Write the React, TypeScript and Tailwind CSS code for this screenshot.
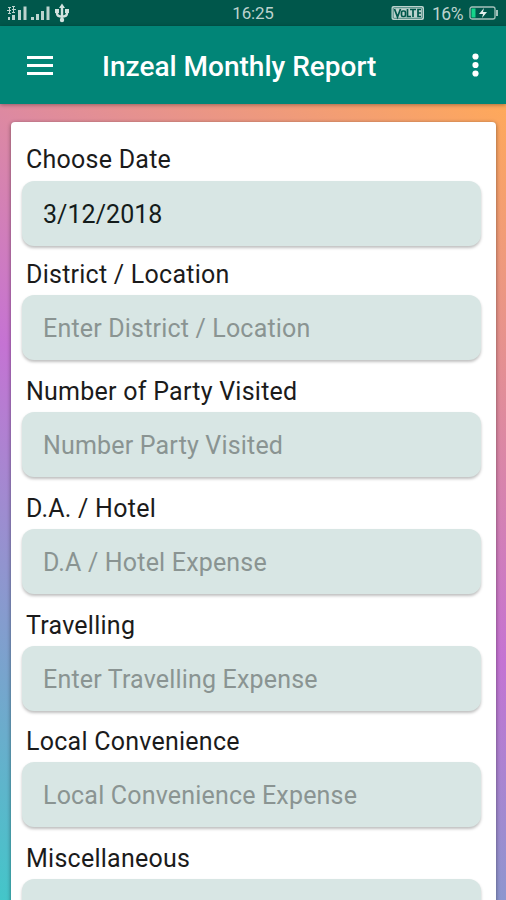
import clsx from "clsx";

const fields = [
  { label: "Choose Date", value: "3/12/2018", height: "h-[114px]", labelPad: "pb-[4px]" },
  { label: "District / Location", placeholder: "Enter District / Location", height: "h-[117px]", labelPad: "pb-[2px]" },
  { label: "Number of Party Visited", placeholder: "Number Party Visited", height: "h-[117px]", labelPad: "pb-[2px]" },
  { label: "D.A. / Hotel", placeholder: "D.A / Hotel Expense", height: "h-[117px]", labelPad: "pb-[2px]" },
  { label: "Travelling", placeholder: "Enter Travelling Expense", height: "h-[116px]", labelPad: "pb-[2px]" },
  { label: "Local Convenience", placeholder: "Local Convenience Expense", height: "h-[117px]", labelPad: "pb-[2px]" },
  { label: "Miscellaneous", placeholder: "", height: "h-[117px]", labelPad: "pb-[2px]" },
];

function StatusBar() {
  return (
    <div className="flex h-[26px] shrink-0 items-center justify-between bg-[#00574b] pr-[7px] pl-[7px] text-[#bcd3ce]">
      <svg width="64" height="22" viewBox="0 0 64 22" fill="currentColor">
        <path d="M1 5h3v1H1zM5 4h3v1H5zM0 8h4v1H0zM5 7h4v1H5zM1 11h3v1H1zM5 10h3v1H5zM2 5h1v7H2zM6 4h1v7H6z" />
        <path d="M1 15h2v3H1zM5 13h3v5H5zM11 8h3v10h-3zM16.500 4.500h3V18h-3z" />
        <path d="M24 15h3v3h-3zM29 12h3v6h-3zM34 9h3v9h-3zM39.500 4.500h3V18h-3z" />
        <g fill="none" stroke="#d3e2df" strokeWidth="2.400">
          <path d="M55 4v15M50 9v2.500q0 3 5 3 5 0 5-3V9" />
        </g>
        <g fill="#d3e2df">
          <path d="M55 1.500l3 4.500h-6zM48 7h4v4h-4zM58 7h4v4h-4z" />
          <circle cx="55" cy="18" r="2.200" />
        </g>
      </svg>
      <span className="pt-[2px] pl-[44px] text-[17px] tracking-[-0.2px]">16:25</span>
      <div className="flex items-center">
        <svg width="34" height="16" viewBox="0 0 34 16">
          <rect x="0.500" y="1" width="32.500" height="14" rx="2" fill="#bcd3ce" />
          <rect x="2.200" y="2.700" width="29.100" height="10.600" rx="1" fill="none" stroke="#00574b" strokeWidth="0.600" />
          <g fill="none" stroke="#00574b" strokeWidth="1.700">
            <path d="M3.500 4l3 8 3-8M16.500 4v7.500H20M19 4.500h6M22 4.500V12M30 4.500h-3v7h3M27 8h3" />
            <rect x="10.500" y="6" width="4" height="5.500" rx="1.500" />
          </g>
        </svg>
        <span className="ml-[7px] pt-[2px] text-[17.500px] tracking-[-0.5px]">16%</span>
        <svg className="ml-[6px]" width="30" height="16" viewBox="0 0 30 16">
          <rect x="1" y="2" width="25" height="12" rx="2" fill="none" stroke="#a5c2bc" strokeWidth="1.300" />
          <path d="M27 5h2v6h-2z" fill="#a5c2bc" />
          <path d="M2.500 3.500h4v9h-4z" fill="#14d58b" />
          <path d="M15 3l-5 6h4l-1 4 5-6h-4z" fill="#e4efed" />
        </svg>
      </div>
    </div>
  );
}

function Toolbar() {
  return (
    <header className="z-10 flex h-[78px] shrink-0 items-center bg-[#018577] pr-[27px] pl-[27px] text-white shadow-[0_1px_4px_rgba(0,0,0,0.35)]">
      <div className="flex flex-col gap-[5px]">
        <span className="h-[3px] w-[26px] bg-white" />
        <span className="h-[3px] w-[26px] bg-white" />
        <span className="h-[3px] w-[26px] bg-white" />
      </div>
      <h1 className="ml-[49px] flex-1 pt-[4px] text-[28px] font-medium whitespace-nowrap">Inzeal Monthly Report</h1>
      <svg width="7" height="24" viewBox="0 0 7 24" fill="currentColor">
        <circle cx="3.500" cy="3.500" r="3.100" />
        <circle cx="3.500" cy="12" r="3.100" />
        <circle cx="3.500" cy="20.500" r="3.100" />
      </svg>
    </header>
  );
}

export default function App() {
  return (
    <div className="flex h-[900px] w-[506px] flex-col overflow-hidden font-[Roboto,sans-serif]">
      <StatusBar />
      <Toolbar />
      <main className="min-h-0 flex-1 overflow-hidden bg-[linear-gradient(32.4deg,#43c6c9_0%,#c573d3_50%,#ffa95a_100%)] pt-[18px] pr-[10px] pl-[11px]">
        <div className="h-[900px] rounded-[4px] bg-white pt-[20px] pr-[15px] pl-[11px] shadow-[0_1px_4px_rgba(0,0,0,0.45)]">
          {fields.map((f) => (
            <div key={f.label} className={f.height}>
              <div
                className={clsx(
                  "flex h-[39px] items-center pl-[4px] text-[25px] tracking-[0.25px] whitespace-nowrap text-[#1b1b1b]",
                  f.labelPad,
                )}
              >
                {f.label}
              </div>
              <div
                className={clsx(
                  "flex h-[65px] items-center rounded-[12px] bg-[#d8e6e4] pt-[3px] pl-[21px] text-[25px] whitespace-nowrap shadow-[0_2px_3px_rgba(0,0,0,0.25)]",
                  f.value ? "tracking-[0.05px] text-[#141c1b]" : "tracking-[0.18px] text-[#8a9492]",
                )}
              >
                {f.value ?? f.placeholder}
              </div>
            </div>
          ))}
        </div>
      </main>
    </div>
  );
}
